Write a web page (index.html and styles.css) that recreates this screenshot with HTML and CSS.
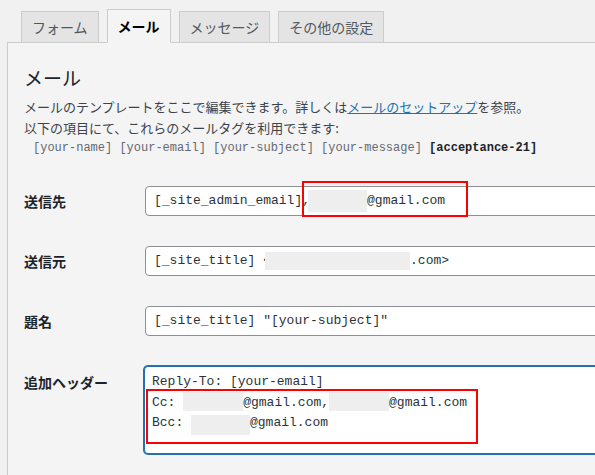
FILE: index.html
```html
<!DOCTYPE html>
<html lang="ja">
<head>
<meta charset="utf-8">
<title>メール</title>
<link rel="stylesheet" href="styles.css">
</head>
<body>
<div class="tabs">
  <div class="tab">フォーム</div>
  <div class="tab active">メール</div>
  <div class="tab">メッセージ</div>
  <div class="tab">その他の設定</div>
</div>
<div class="panel">
  <h2 class="title">メール</h2>
  <p class="desc">メールのテンプレートをここで編集できます。詳しくは<a href="#">メールのセットアップ</a>を参照。<br>以下の項目にて、これらのメールタグを利用できます:</p>
  <p class="tags">[your-name] [your-email] [your-subject] [your-message] <strong>[acceptance-21]</strong></p>
  <div class="form">
    <div class="label">送信先</div>
    <div class="field">[_site_admin_email],<span class="redact r-to"></span>@gmail.com<span class="mark mark-to"></span></div>

    <div class="label">送信元</div>
    <div class="field">[_site_title] &lt;<span class="redact r-from"></span>.com&gt;</div>

    <div class="label">題名</div>
    <div class="field">[_site_title] "[your-subject]"</div>

    <div class="label label-top">追加ヘッダー</div>
    <div class="field area">Reply-To: [your-email]<br>Cc: <span class="redact r-line"></span>@gmail.com,<span class="redact r-line"></span>@gmail.com<br>Bcc: <span class="redact r-line r-bcc"></span>@gmail.com<span class="mark mark-hdr"></span></div>
  </div>
</div>
</body>
</html>
```

FILE: styles.css
```css
html, body {
  margin: 0;
  padding: 0;
  overflow: hidden;
}
body {
  background: #f1f1f1;
  width: 595px;
  height: 475px;
  font-family: "Noto Sans CJK JP", "Noto Sans", sans-serif;
  color: #1d2327;
}
.tabs {
  display: flex;
  align-items: flex-end;
  gap: 8px;
  padding: 0 0 0 21px;
  height: 43px;
  margin-bottom: -1px;
  position: relative;
  z-index: 1;
}
.tab {
  box-sizing: border-box;
  height: 32px;
  padding: 0 10px;
  border: 1px solid #cccccc;
  background: #e4e4e4;
  color: #50575e;
  font-size: 14px;
  line-height: 30px;
  white-space: nowrap;
}
.tab.active {
  height: 34px;
  background: #f4f4f4;
  border-bottom-color: #f4f4f4;
  color: #000;
  font-weight: bold;
  line-height: 32px;
}
.panel {
  box-sizing: border-box;
  margin-left: 7px;
  border-left: 1px solid #cccccc;
  border-top: 1px solid #cccccc;
  background: #f4f4f4;
  padding: 0 0 0 16px;
  height: 433px;
  overflow: hidden;
}
.title {
  margin: 22px 0 0;
  font-size: 19px;
  line-height: 26px;
  font-weight: normal;
  color: #1d2327;
}
.desc {
  margin: 5px 0 0;
  font-size: 13px;
  line-height: 21px;
  color: #3c434a;
}
.desc a {
  color: #2271b1;
  text-decoration: underline;
}
.tags {
  margin: 0;
  padding-left: 9px;
  font-family: "Liberation Mono", monospace;
  font-size: 12px;
  line-height: 21px;
  color: #646970;
}
.tags strong {
  color: #1d2327;
}
.form {
  margin-top: 27px;
  display: grid;
  grid-template-columns: 121px 480px;
  row-gap: 30px;
}
.label {
  font-size: 14px;
  font-weight: bold;
  line-height: 30px;
  color: #1d2327;
}
.label-top {
  line-height: 20px;
  padding-top: 6px;
}
.field {
  position: relative;
  box-sizing: border-box;
  height: 30px;
  border: 1px solid #8c8f94;
  border-radius: 4px;
  background: #fff;
  padding: 0 8px;
  font-family: "Liberation Mono", monospace;
  font-size: 13px;
  line-height: 28px;
  color: #2c3338;
  white-space: nowrap;
}
.field.area {
  height: 88px;
  margin-left: -1px;
  border-color: #2271b1;
  box-shadow: 0 0 0 1px #2271b1;
  padding: 5px 7px;
  line-height: 20px;
}
.redact {
  display: inline-block;
  background: #eeeeee;
  vertical-align: middle;
}
.r-to {
  width: 59px;
  height: 22px;
  margin-left: -2px;
}
.r-from {
  width: 145px;
  height: 18px;
  margin-left: -6px;
}
.r-line {
  width: 60px;
  height: 19px;
  vertical-align: -5px;
}
.r-bcc {
  width: 59px;
  height: 20px;
  vertical-align: -9px;
}
.mark {
  position: absolute;
  box-sizing: border-box;
  border: 2px solid #ff0000;
}
.mark-to {
  left: 156px;
  top: -6px;
  width: 166px;
  height: 36px;
}
.mark-hdr {
  left: 1px;
  top: 22px;
  width: 332px;
  height: 55px;
}
```
